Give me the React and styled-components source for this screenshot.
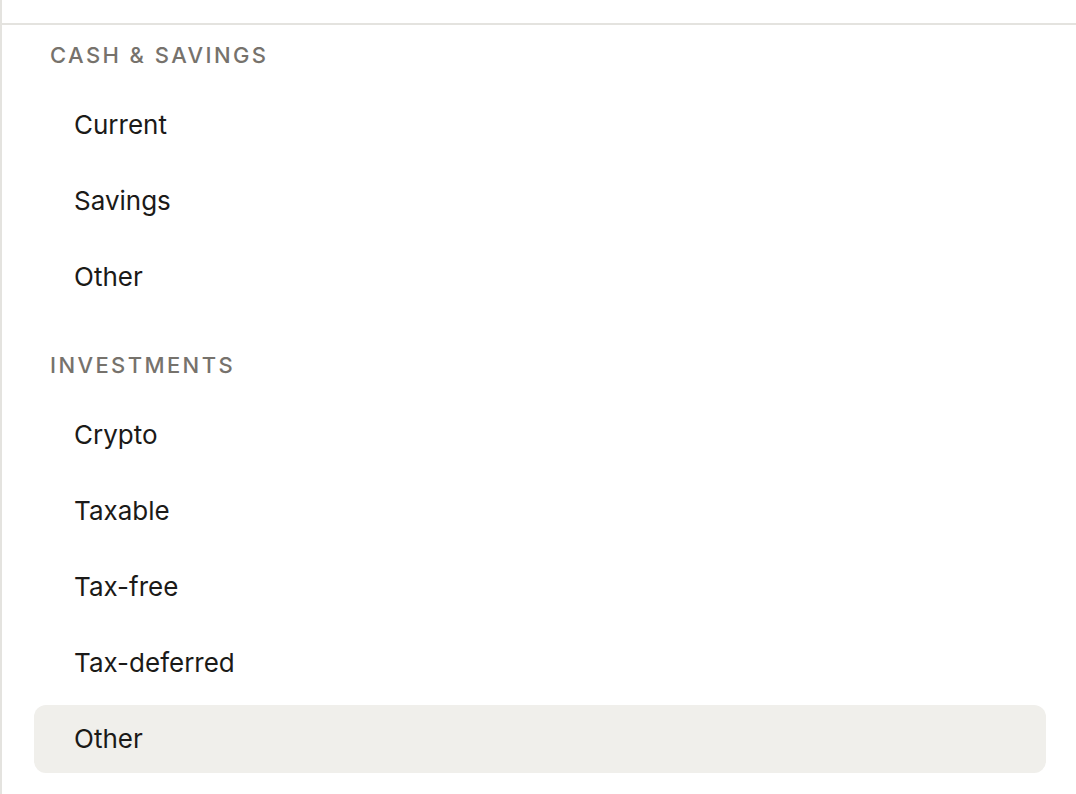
import React from "react";
import styled, { createGlobalStyle } from "styled-components";

const sections = [
  { title: "Cash & Savings", items: ["Current", "Savings", "Other"] },
  {
    title: "Investments",
    items: ["Crypto", "Taxable", "Tax-free", "Tax-deferred", "Other"],
    active: 4,
  },
];

function App() {
  return (
    <>
      <GlobalStyle />
      <Panel>
        <TopBar />
        {sections.map((section) => (
          <Section key={section.title}>
            <Heading>{section.title}</Heading>
            <List>
              {section.items.map((item, i) => (
                <Row key={item + i} $active={section.active === i}>
                  {item}
                </Row>
              ))}
            </List>
          </Section>
        ))}
      </Panel>
    </>
  );
}

export default App;

const GlobalStyle = createGlobalStyle`
  body {
    margin: 0;
    background: #ffffff;
    font-family: Inter, "Noto Sans", sans-serif;
    -webkit-font-smoothing: antialiased;
  }
`;

const Panel = styled.div`
  height: 794px;
  overflow: hidden;
  border-left: 2px solid #e4e3df;
  display: flex;
  flex-direction: column;
`;

const TopBar = styled.div`
  height: 23px;
  flex-shrink: 0;
  border-bottom: 2px solid #e4e3df;
`;

const Section = styled.section`
  padding: 14px 30px 0 32px;

  & + & {
    padding-top: 38px;
  }
`;

const Heading = styled.h3`
  margin: 0 0 20px;
  padding-left: 16px;
  font-size: 22px;
  line-height: 32px;
  font-weight: 500;
  letter-spacing: 2.4px;
  text-transform: uppercase;
  color: #76726c;
`;

const List = styled.div`
  display: flex;
  flex-direction: column;
  gap: 8px;
`;

const Row = styled.div`
  height: 68px;
  box-sizing: border-box;
  padding: 0 0 2px 40px;
  display: flex;
  align-items: center;
  border-radius: 12px;
  font-size: 26px;
  color: #1b1a18;
  background: ${(p) => (p.$active ? "#f0efeb" : "transparent")};
`;
